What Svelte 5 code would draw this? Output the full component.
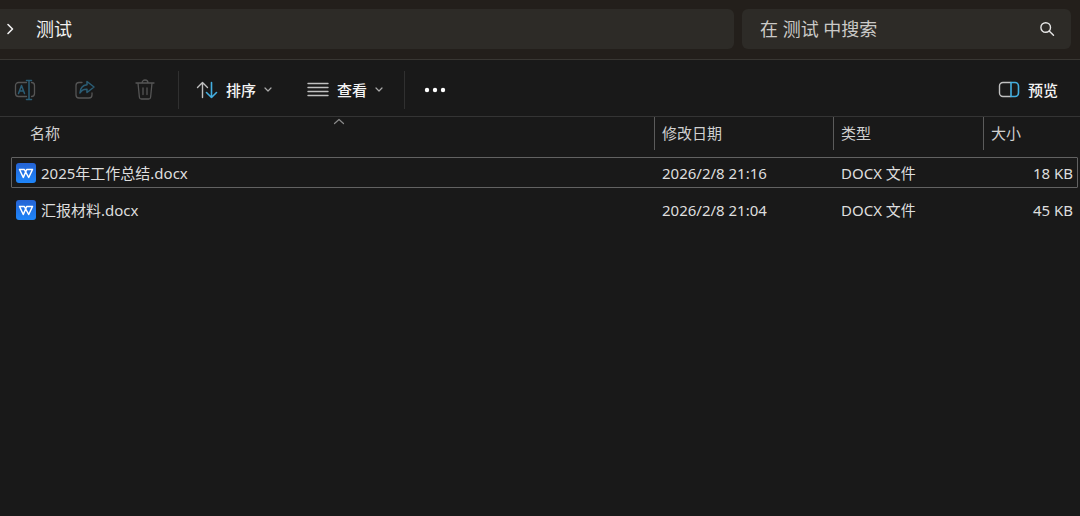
<script>
  const files = [
    { name: '2025年工作总结.docx', date: '2026/2/8 21:16', type: 'DOCX 文件', size: '18 KB' },
    { name: '汇报材料.docx', date: '2026/2/8 21:04', type: 'DOCX 文件', size: '45 KB' }
  ];
  let focused = $state(0);
  let query = $state('');
</script>

<svelte:head><title>测试</title></svelte:head>

<div class="explorer">
  <header class="address-row">
    <nav class="address" aria-label="路径">
      <svg class="crumb-arrow" width="8" height="12" viewBox="0 0 8 12" aria-hidden="true"><path d="M2 1.500 6.500 6l-4.500 4.500" /></svg>
      <a class="crumb" href="#folder">测试</a>
    </nav>
    <form class="search" onsubmit={(e) => e.preventDefault()}>
      <input type="text" aria-label="搜索" placeholder="在 测试 中搜索" bind:value={query} />
      <button type="submit" aria-label="开始搜索">
        <svg width="16" height="16" viewBox="0 0 16 16" aria-hidden="true"><circle cx="6.700" cy="6.500" r="4.800" /><path d="m10.200 10 4.300 4.300" /></svg>
      </button>
    </form>
  </header>

  <div class="toolbar" role="toolbar" aria-label="命令">
    <button class="icon-button" disabled aria-label="重命名">
      <svg width="22" height="22" viewBox="0 0 22 22" aria-hidden="true">
        <path class="grey" d="M12.500 3.500H4.500a3 3 0 0 0-3 3v8a3 3 0 0 0 3 3h8M17.500 3.500a3 3 0 0 1 3 3v8a3 3 0 0 1-3 3" />
        <path class="blue" d="m4.500 14.500 3-8 3 8M5.500 12h4M12.500 1.500h5M12.500 20.500h5M15 1.500v19" />
      </svg>
    </button>
    <button class="icon-button" disabled aria-label="共享">
      <svg width="22" height="22" viewBox="0 0 22 22" aria-hidden="true">
        <path class="grey" d="M8 3.500H5a3 3 0 0 0-3 3V16a3 3 0 0 0 3 3h10a3 3 0 0 0 3-3v-2" />
        <path class="blue" d="M13 2.500 20 8l-7 5.500v-3.200c-3.200-.2-5.400.9-7 3.700.2-4.700 2.500-7.700 7-8.200Z" />
      </svg>
    </button>
    <button class="icon-button" disabled aria-label="删除">
      <svg width="22" height="22" viewBox="0 0 22 22" aria-hidden="true">
        <path class="grey" d="M2 4h18M8 4a3 3 0 0 1 6 0M4 4l1.400 14.200a2 2 0 0 0 2 1.800h7.200a2 2 0 0 0 2-1.800L18 4M9 9v6.500M13 9v6.500" />
      </svg>
    </button>
    <span class="divider"></span>
    <button class="menu-button sort">
      <svg width="22" height="20" viewBox="0 0 22 20" aria-hidden="true">
        <path class="light" d="M6.500 17.500v-15M1.500 7.500l5-5 5 5" />
        <path class="bright" d="M15.500 2.500v15M10.500 12.500l5 5 5-5" />
      </svg>
      <span>排序</span>
      <svg class="caret" width="8" height="6" viewBox="0 0 8 6" aria-hidden="true"><path d="m1 1 3 3 3-3" /></svg>
    </button>
    <button class="menu-button view">
      <svg width="22" height="20" viewBox="0 0 22 20" aria-hidden="true">
        <path class="light" d="M1 3.500h20M1 7.500h20M1 11.500h20M1 15.500h20" />
      </svg>
      <span>查看</span>
      <svg class="caret" width="8" height="6" viewBox="0 0 8 6" aria-hidden="true"><path d="m1 1 3 3 3-3" /></svg>
    </button>
    <span class="divider"></span>
    <button class="icon-button more" aria-label="更多">
      <svg width="22" height="6" viewBox="0 0 22 6" aria-hidden="true"><circle cx="3" cy="3" r="2.200" /><circle cx="11" cy="3" r="2.200" /><circle cx="19" cy="3" r="2.200" /></svg>
    </button>
    <button class="menu-button preview">
      <svg width="22" height="20" viewBox="0 0 22 20" aria-hidden="true">
        <path class="light" d="M13 2.500H5A3.500 3.500 0 0 0 1.500 6v7A3.500 3.500 0 0 0 5 16.500h8" />
        <path class="bright" d="M13 2.500h4A3.500 3.500 0 0 1 20.500 6v7a3.500 3.500 0 0 1-3.500 3.500h-4Z" />
      </svg>
      <span>预览</span>
    </button>
  </div>

  <table>
    <thead>
      <tr>
        <th scope="col" class="name-head" aria-sort="ascending">
          名称
          <svg class="sort-mark" width="12" height="7" viewBox="0 0 12 7" aria-hidden="true"><path d="m1.500 5.500 4.500-4 4.500 4" /></svg>
        </th>
        <th scope="col">修改日期</th>
        <th scope="col">类型</th>
        <th scope="col">大小</th>
      </tr>
    </thead>
    <tbody>
      {#each files as file, i}
        <tr class:focused={i === focused} onclick={() => (focused = i)}>
          <td class="name">
            <svg width="20" height="20" viewBox="0 0 20 20" aria-hidden="true">
              <defs>
                <linearGradient id="doc{i}" x1="0" y1="0" x2="0" y2="1">
                  <stop offset="0" stop-color="#2563d4" /><stop offset="1" stop-color="#1e86fa" />
                </linearGradient>
              </defs>
              <rect width="20" height="20" rx="3" fill="url(#doc{i})" />
              <path class="mark" d="M3.500 6.500h4.800L12.700 14.500 16.500 6.500H10.700L7.300 14.500 3.500 6.500" />
            </svg>
            <span>{file.name}</span>
          </td>
          <td>{file.date}</td>
          <td>{file.type}</td>
          <td class="size">{file.size}</td>
        </tr>
      {/each}
    </tbody>
  </table>
</div>

<style>
  :global(body) {
    margin: 0;
    background: #191919;
  }
  .explorer {
    min-height: 100vh;
    background: #191919;
    color: #dedede;
    font: 15px/20px "Noto Sans", "Noto Sans CJK SC", sans-serif;
  }
  svg {
    display: block;
    flex: none;
    fill: none;
    stroke-linecap: round;
    stroke-linejoin: round;
  }
  button,
  input {
    border: 0;
    padding: 0;
    background: none;
    color: inherit;
    font: inherit;
  }
  .address-row {
    display: grid;
    grid-template-columns: 734fr 329fr;
    gap: 8px;
    padding: 9px 9px 10px 0;
    border-bottom: 1px solid #393733;
    background: #231f1b;
    font-size: 18px;
    line-height: 24px;
  }
  .address,
  .search {
    display: flex;
    align-items: center;
    height: 40px;
    background: #2d2b27;
  }
  .address {
    gap: 22px;
    padding-left: 6px;
    border-radius: 0 6px 6px 0;
  }
  .crumb {
    color: #f2f2f2;
    text-decoration: none;
  }
  .crumb-arrow {
    stroke: #f0f0f0;
    stroke-width: 1.6;
  }
  .search {
    padding: 0 16px 0 18px;
    border-radius: 6px;
  }
  .search input {
    flex: 1;
    min-width: 0;
    outline: none;
  }
  .search input::placeholder {
    color: #cbcac8;
    opacity: 1;
  }
  .search svg {
    stroke: #e6e6e6;
    stroke-width: 1.4;
  }
  .toolbar {
    box-sizing: border-box;
    display: flex;
    align-items: center;
    height: 57px;
    padding: 3px 22px 0 14px;
    border-bottom: 1px solid #343434;
    color: #f4f4f4;
    font-weight: 500;
  }
  .icon-button {
    display: grid;
    place-items: center;
    width: 22px;
    height: 40px;
    margin-right: 38px;
  }
  .icon-button + .divider {
    margin-left: -16px;
  }
  .divider {
    width: 1px;
    height: 38px;
    background: #303030;
  }
  .menu-button {
    display: flex;
    align-items: center;
    gap: 8px;
    height: 40px;
  }
  .sort {
    margin-left: 17px;
  }
  .view {
    margin: 0 21px 0 35px;
  }
  .more {
    margin: 0 0 0 19px;
  }
  .more svg {
    fill: #fff;
  }
  .preview {
    margin-left: auto;
  }
  .grey {
    stroke: #555;
    stroke-width: 1.3;
  }
  .blue {
    stroke: #2b5d75;
    stroke-width: 1.5;
  }
  .light {
    stroke: #c0c0c0;
    stroke-width: 1.4;
  }
  .bright {
    stroke: #43aee0;
    stroke-width: 1.6;
  }
  .caret {
    stroke: #aaa;
    stroke-width: 1.2;
  }
  table,
  thead {
    display: block;
  }
  table {
    padding: 0 2px 0 11px;
  }
  tbody {
    display: flex;
    flex-direction: column;
    gap: 6px;
    margin-top: 7px;
  }
  tr {
    display: grid;
    grid-template-columns: 1fr 179px 150px 95px;
    align-items: center;
  }
  th {
    box-sizing: border-box;
    height: 33px;
    padding: 6px 0 0 7px;
    border-left: 1px solid #5b5b5b;
    color: #d0d0d0;
    font-weight: 400;
    text-align: left;
  }
  .name-head {
    position: relative;
    padding-left: 18px;
    border-left-color: transparent;
  }
  .sort-mark {
    position: absolute;
    top: 1px;
    left: 50%;
    stroke: #8a8a8a;
    stroke-width: 1.2;
  }
  tbody tr {
    box-sizing: border-box;
    height: 31px;
    border: 1px solid transparent;
    border-radius: 1px;
    grid-template-columns: 1fr 179px 150px 94px;
  }
  tbody tr.focused {
    border-color: #626262;
  }
  td {
    padding: 0 0 0 8px;
  }
  .name {
    display: flex;
    align-items: center;
    gap: 5px;
    padding-left: 4px;
  }
  .mark {
    stroke: #fff;
    stroke-width: 1.5;
  }
  .size {
    padding-right: 4px;
    text-align: right;
  }
</style>
